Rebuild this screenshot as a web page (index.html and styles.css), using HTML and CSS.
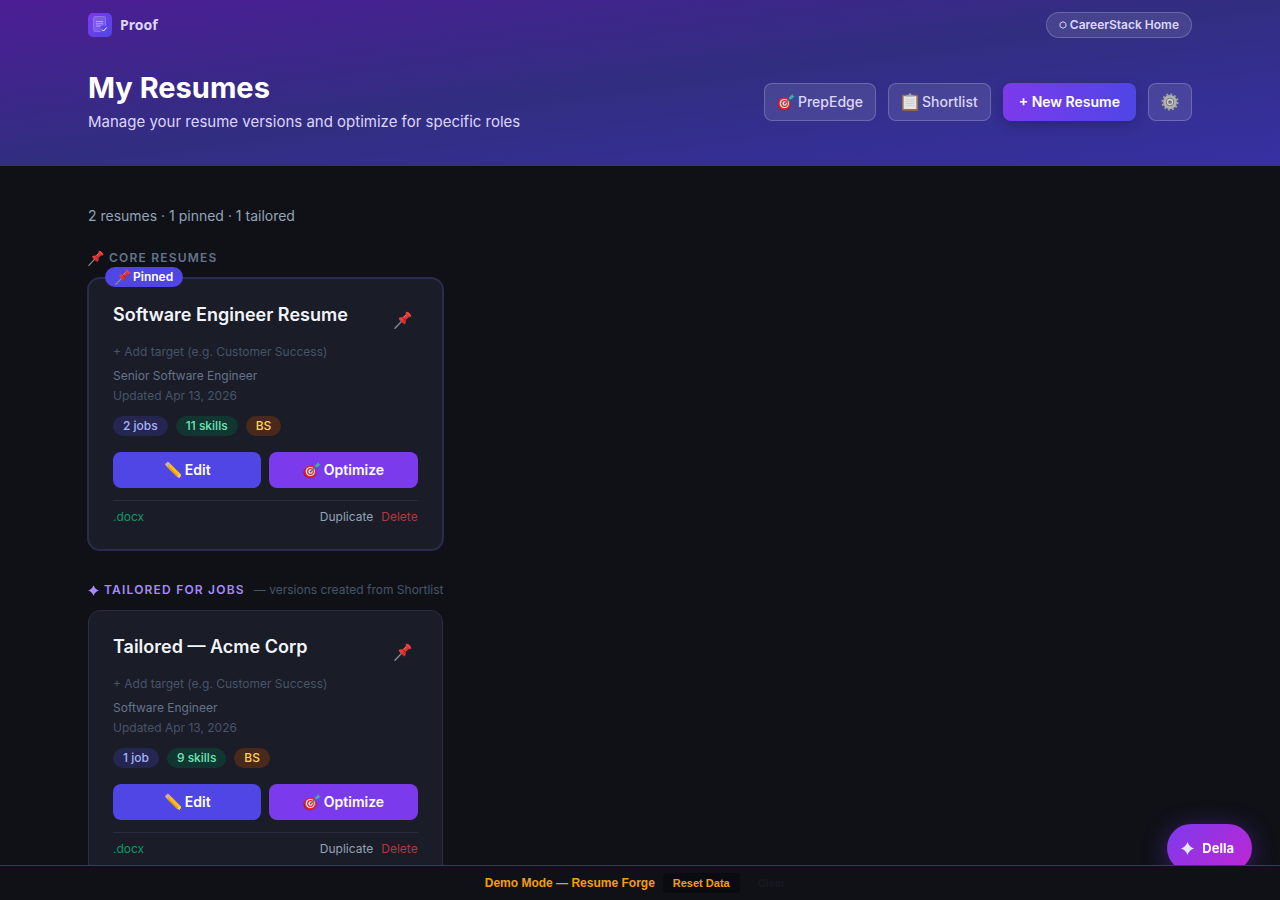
FILE: index.html
```html
<!DOCTYPE html>
<html lang="en">
<head>
<meta charset="utf-8">
<meta name="viewport" content="width=device-width, initial-scale=1">
<title>Proof — My Resumes</title>
<link rel="stylesheet" href="styles.css">
</head>
<body>
<svg class="sprite" aria-hidden="true">
  <defs>
    <linearGradient id="lg" x1="0" y1="0" x2="1" y2="1"><stop offset="0" stop-color="#7c3aed"/><stop offset="1" stop-color="#4f46e5"/></linearGradient>
    <linearGradient id="pg" x1="0" y1="0" x2="1" y2="1"><stop offset="0" stop-color="#ff5a4f"/><stop offset="1" stop-color="#b3141c"/></linearGradient>
  </defs>
  <symbol id="pin" viewBox="0 0 18 18">
    <path d="M1 17.300L7.300 10.600" stroke="#8b929c" stroke-width="1.300" stroke-linecap="round"/>
    <path d="M4.600 7.200C6 6 7.800 6 9 6.300L11.900 3.500C11.500 2.400 11.700 1.400 12.400.8C14.500 1 17 3.500 17.300 5.600C16.700 6.400 15.600 6.500 14.600 6.200L11.800 9.100C12.100 10.600 12 12.200 10.900 13.400C8.600 12.600 5.600 9.800 4.600 7.200Z" fill="url(#pg)"/>
    <path d="M12.400.8C14.500 1 17 3.500 17.300 5.600C15.200 5.200 13 3 12.400.8Z" fill="#f5473f"/>
    <path d="M9.200 6.500L12 3.900" stroke="#ff8a80" stroke-width=".8"/>
    <path d="M9 6.300C9.300 7.600 10.500 8.800 11.800 9.100" fill="none" stroke="#8e1016" stroke-width=".7"/>
  </symbol>
  <symbol id="target" viewBox="0 0 18 18">
    <ellipse cx="7" cy="11.200" rx="6.500" ry="6.100" fill="#a91520"/>
    <circle cx="7.300" cy="10.600" r="6.100" fill="#e02a33"/>
    <circle cx="7.400" cy="10.500" r="4.600" fill="#f5e9e9"/>
    <circle cx="7.500" cy="10.500" r="3.400" fill="#d9262f"/>
    <circle cx="7.600" cy="10.500" r="2.200" fill="#f5e9e9"/>
    <circle cx="7.700" cy="10.500" r="1" fill="#d9262f"/>
    <path d="M7.800 10.300L14 4.500" stroke="#3a7d84" stroke-width="1.100"/>
    <path d="M12 4.200L15.800.9L15.900 2.700L17.700 3.300L14.500 6.300L12.300 6.100Z" fill="#3fa9a5"/>
  </symbol>
  <symbol id="clipboard" viewBox="0 0 18 18">
    <rect x="1" y="1.800" width="16" height="16" rx="1" fill="#9b6f3f"/>
    <rect x="2.600" y="3.200" width="12.800" height="12.800" fill="#e4e4e6"/>
    <path d="M4.800 6.500h8.400M4.800 8.500h8.400M4.800 10.500h8.400M4.800 12.500h8.400" stroke="#c9cace" stroke-width=".8"/>
    <path d="M5 3.400V2.200h2.600Q7.700.3 9 .3T10.400 2.200H13v1.200Z" fill="#9aa7ba"/>
  </symbol>
  <symbol id="pencil" viewBox="0 0 18 18">
    <path d="M.8 3.300L3.900.5L6 2.600L2.900 5.500Z" fill="#f29b9b"/>
    <path d="M2.100 4.700L5.100 1.700L6.300 2.800L3.200 5.900Z" fill="#b9bec6"/>
    <path d="M3.200 5.900L6.300 2.800L16.600 12.900L17.300 17.200L13.300 16Z" fill="#fbbf15"/>
    <path d="M3.200 5.900L4.200 4.900L14.400 15L13.300 16Z" fill="#e89a08"/>
    <path d="M13.300 16L14.600 13.700L16.600 12.900L17.300 17.200Z" fill="#edc79a"/>
    <path d="M15.700 16.700L16.900 15.200L17.300 17.200Z" fill="#333"/>
  </symbol>
  <symbol id="gear" viewBox="0 0 18 18">
    <circle cx="9" cy="9" r="7.600" fill="none" stroke="#99a097" stroke-width="2" stroke-dasharray="2 1.979"/>
    <circle cx="9" cy="9" r="5.300" fill="none" stroke="#adb1aa" stroke-width="3.200"/>
    <circle cx="9" cy="9" r="4.200" fill="#787e7b"/>
    <circle cx="9" cy="9" r="2.500" fill="#6b6c90" stroke="#cdd1cc" stroke-width="1.300"/>
  </symbol>
  <symbol id="spark" viewBox="0 0 12 12">
    <path d="M6 0Q7.400 4.600 12 6Q7.400 7.400 6 12Q4.600 7.400 0 6Q4.600 4.600 6 0Z" fill="currentColor"/>
  </symbol>
</svg>

<header class="hero">
  <nav class="container topbar">
    <a class="brand" href="#">
      <svg class="logo" viewBox="0 0 24 24" aria-hidden="true">
        <rect width="24" height="24" rx="5" fill="url(#lg)"/>
        <rect x="5.500" y="3.500" width="12" height="15" rx="1.500" fill="#fff" fill-opacity=".14" stroke="#fff" stroke-opacity=".25" stroke-width=".8"/>
        <path d="M8 8.500h7M8 10.800h7M8 13h4.500" stroke="#fff" stroke-opacity=".55" stroke-width=".8"/>
        <circle cx="16.500" cy="16.500" r="4" fill="#5b45e8"/>
        <path d="M13.800 16.500l1.600 1.600 3.300-3.600" fill="none" stroke="#fff" stroke-width="1"/>
      </svg>
      <span>Proof</span>
    </a>
    <a class="home-link" href="#"><svg class="hex" viewBox="0 0 8 8" aria-hidden="true"><path d="M4 .7L6.900 2.300V5.700L4 7.300L1.100 5.700V2.300Z" fill="none" stroke="currentColor"/></svg>CareerStack Home</a>
  </nav>
  <div class="container title-row">
    <div>
      <h1>My Resumes</h1>
      <p class="subtitle">Manage your resume versions and optimize for specific roles</p>
    </div>
    <div class="actions">
      <a class="ghost" href="#"><svg class="icon" aria-hidden="true"><use href="#target"/></svg>PrepEdge</a>
      <a class="ghost" href="#"><svg class="icon" aria-hidden="true"><use href="#clipboard"/></svg>Shortlist</a>
      <button class="primary" type="button">+ New Resume</button>
      <button class="ghost" type="button" aria-label="Settings"><svg class="icon" aria-hidden="true"><use href="#gear"/></svg></button>
    </div>
  </div>
</header>

<main class="container content">
  <p class="summary">2 resumes · 1 pinned · 1 tailored</p>

  <section class="group">
    <h2 class="group-title"><svg class="icon-sm" aria-hidden="true"><use href="#pin"/></svg>Core Resumes</h2>
    <div class="grid">
      <article class="card pinned">
        <span class="pin-badge"><svg class="icon-sm" aria-hidden="true"><use href="#pin"/></svg>Pinned</span>
        <div class="card-head"><h3>Software Engineer Resume</h3><button class="pin" type="button" aria-label="Unpin"><svg class="icon" aria-hidden="true"><use href="#pin"/></svg></button></div>
        <button class="target" type="button">+ Add target (e.g. Customer Success)</button>
        <p class="role">Senior Software Engineer</p>
        <p class="updated">Updated Apr 13, 2026</p>
        <div class="tags"><span class="tag jobs">2 jobs</span><span class="tag skills">11 skills</span><span class="tag degree">BS</span></div>
        <div class="card-actions">
          <button class="edit" type="button"><svg class="icon" aria-hidden="true"><use href="#pencil"/></svg>Edit</button>
          <button class="optimize" type="button"><svg class="icon" aria-hidden="true"><use href="#target"/></svg>Optimize</button>
        </div>
        <div class="card-foot"><button class="docx" type="button">.docx</button><button class="dup" type="button">Duplicate</button><button class="del" type="button">Delete</button></div>
      </article>
    </div>
  </section>

  <section class="group">
    <h2 class="group-title tailored"><svg class="star" aria-hidden="true"><use href="#spark"/></svg>Tailored for Jobs <span class="note">— versions created from Shortlist</span></h2>
    <div class="grid">
      <article class="card">
        <div class="card-head"><h3>Tailored — Acme Corp</h3><button class="pin" type="button" aria-label="Pin"><svg class="icon" aria-hidden="true"><use href="#pin"/></svg></button></div>
        <button class="target" type="button">+ Add target (e.g. Customer Success)</button>
        <p class="role">Software Engineer</p>
        <p class="updated">Updated Apr 13, 2026</p>
        <div class="tags"><span class="tag jobs">1 job</span><span class="tag skills">9 skills</span><span class="tag degree">BS</span></div>
        <div class="card-actions">
          <button class="edit" type="button"><svg class="icon" aria-hidden="true"><use href="#pencil"/></svg>Edit</button>
          <button class="optimize" type="button"><svg class="icon" aria-hidden="true"><use href="#target"/></svg>Optimize</button>
        </div>
        <div class="card-foot"><button class="docx" type="button">.docx</button><button class="dup" type="button">Duplicate</button><button class="del" type="button">Delete</button></div>
      </article>
    </div>
  </section>
</main>

<button class="della" type="button"><svg class="spark" aria-hidden="true"><use href="#spark"/></svg>Della</button>

<div class="demo-bar">
  <span>Demo Mode — Resume Forge</span>
  <button class="reset" type="button">Reset Data</button>
  <button class="clear" type="button">Clear</button>
</div>
</body>
</html>
```

FILE: styles.css
```css
*, *::before, *::after { box-sizing: border-box; }
html { scrollbar-width: none; }
body {
  margin: 0;
  background: #0f1117;
  color: #f1f5f9;
  font-family: Inter, "Noto Sans", sans-serif;
  font-size: 14px;
  line-height: 20px;
}
h1, h2, h3, p { margin: 0; }
button { font: inherit; color: inherit; background: none; border: 0; padding: 0; cursor: pointer; }
a { color: inherit; text-decoration: none; }

.sprite { position: absolute; width: 0; height: 0; }
.icon { width: 18px; height: 18px; flex: none; }
.icon-sm { width: 16px; height: 16px; flex: none; }
.star { width: 11px; height: 11px; flex: none; }

.container { max-width: 1152px; margin: 0 auto; padding: 0 24px; }

.hero { background: linear-gradient(to bottom right, #4c1d95, #312e81, #3730a3); padding-bottom: 32px; }
.topbar { display: flex; align-items: center; justify-content: space-between; padding-top: 12px; padding-bottom: 12px; }
.brand { display: flex; align-items: center; gap: 8px; color: #ddd6fe; font-family: "Noto Sans", sans-serif; font-weight: 700; }
.logo { width: 24px; height: 24px; }
.home-link {
  display: flex;
  align-items: center;
  gap: 3px;
  padding: 4px 12px;
  border: 1px solid rgba(255, 255, 255, .2);
  border-radius: 13px;
  background: rgba(255, 255, 255, .1);
  color: #ddd6fe;
  font-size: 12px;
  font-weight: 600;
  line-height: 16px;
}
.hex { width: 8px; height: 8px; }
.title-row { display: flex; align-items: center; justify-content: space-between; gap: 24px; padding-top: 20px; }
h1 { font-size: 29px; line-height: 36px; font-weight: 700; color: #fff; }
.subtitle { margin-top: 4px; font-size: 15px; line-height: 24px; color: #ddd6fe; }
.actions { display: flex; gap: 12px; }
.ghost {
  display: flex;
  align-items: center;
  gap: 3px;
  padding: 8px 12px;
  border: 1px solid rgba(255, 255, 255, .2);
  border-radius: 8px;
  background: rgba(255, 255, 255, .1);
  color: #ddd6fe;
  font-weight: 500;
}
.primary {
  padding: 8px 16px;
  border-radius: 8px;
  background: linear-gradient(to right, #7c3aed, #4f46e5);
  color: #fff;
  font-weight: 600;
  box-shadow: 0 4px 12px rgba(0, 0, 0, .2);
}

.content { padding-top: 40px; padding-bottom: 80px; }
.summary { color: #94a3b8; }
.group { margin-top: 24px; }
.group + .group { margin-top: 32px; }
.group-title {
  display: flex;
  align-items: center;
  gap: 5px;
  margin-bottom: 12px;
  font-size: 12px;
  line-height: 16px;
  font-weight: 600;
  letter-spacing: 1.2px;
  text-transform: uppercase;
  color: #64748b;
}
.group-title.tailored { color: #a78bfa; }
.note { margin-left: 4px; color: #475569; font-weight: 400; letter-spacing: 0; text-transform: none; }
.grid { display: grid; grid-template-columns: repeat(3, minmax(0, 1fr)); gap: 20px; }

.card {
  position: relative;
  display: flex;
  flex-direction: column;
  padding: 24px;
  border: 1px solid #2a2b45;
  border-radius: 12px;
  background: #1a1c27;
  font-size: 12px;
  line-height: 16px;
}
.card.pinned { box-shadow: 0 0 0 1px #2a2b50; border-color: #2a2b50; }
.pin-badge {
  position: absolute;
  top: -12px;
  left: 16px;
  display: flex;
  align-items: center;
  gap: 2px;
  padding: 2px 10px;
  border-radius: 10px;
  background: #4f46e5;
  color: #fff;
  font-weight: 600;
}
.card-head { display: flex; align-items: flex-start; justify-content: space-between; gap: 8px; margin-bottom: 7px; }
h3 { font-size: 18px; line-height: 24px; font-weight: 600; color: #f1f5f9; }
.pin { display: flex; padding: 8px 6px; }
.target { align-self: flex-start; color: #475569; }
.role { margin-top: 8px; color: #64748b; }
.updated { margin-top: 4px; color: #475569; }
.tags { display: flex; gap: 8px; margin-top: 12px; }
.tag { padding: 2px 10px; border-radius: 10px; font-weight: 500; }
.jobs { background: #25264f; color: #a5b4fc; }
.skills { background: #113530; color: #6ee7b7; }
.degree { background: #48291c; color: #fcd34d; }
.card-actions { display: grid; grid-template-columns: 1fr 1fr; gap: 8px; margin-top: 16px; font-size: 14px; line-height: 20px; font-weight: 600; color: #fff; }
.edit, .optimize { display: flex; align-items: center; justify-content: center; gap: 3px; padding: 8px; border-radius: 8px; }
.edit { background: #4f46e5; }
.optimize { background: #7c3aed; }
.card-foot { display: flex; gap: 8px; margin-top: 12px; padding-top: 8px; border-top: 1px solid #2a2d42; }
.docx { margin-right: auto; color: #159568; }
.dup { color: #94a3b8; }
.del { color: #b13a40; }

.della {
  position: fixed;
  right: 28px;
  bottom: 28px;
  display: flex;
  align-items: center;
  gap: 8px;
  padding: 14px 18px 14px 14px;
  border-radius: 24px;
  background: linear-gradient(135deg, #7c3aed, #c026d3);
  box-shadow: 0 4px 24px rgba(124, 58, 237, .4);
  color: #fff;
  font-size: 13px;
  font-weight: 700;
}
.spark { width: 13px; height: 13px; color: #e2e8f0; }
.demo-bar {
  position: fixed;
  inset: auto 0 0;
  display: flex;
  align-items: center;
  justify-content: center;
  gap: 8px;
  padding: 7px 16px;
  border-top: 1px solid rgba(245, 158, 11, .3);
  background: #0f1117;
  color: #f59e0b;
  font-family: "Liberation Sans", Arial, sans-serif;
  font-size: 12px;
  font-weight: 700;
}
.reset, .clear { padding: 0 10px; border-radius: 4px; font-size: 11px; }
.reset { background: #0a0b10; }
.clear { color: #171920; }
```
